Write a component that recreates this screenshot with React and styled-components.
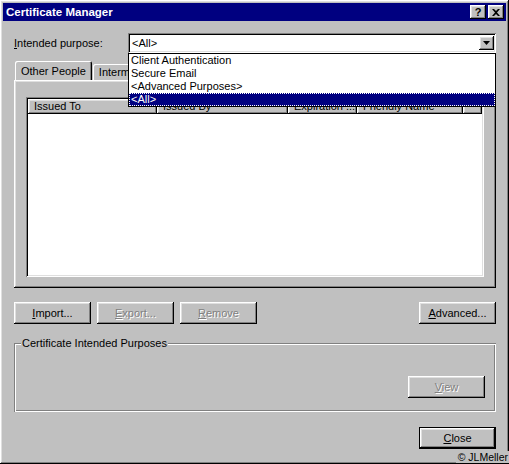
import styled, { createGlobalStyle, css } from "styled-components";

const GlobalStyle = createGlobalStyle`
  html, body {
    margin: 0;
    padding: 0;
    background: #c0c0c0;
  }
  * {
    box-sizing: border-box;
  }
`;

const raised = css`
  box-shadow: inset -1px -1px #000, inset 1px 1px #fff, inset -2px -2px #808080,
    inset 2px 2px #dfdfdf;
`;
const sunken = css`
  box-shadow: inset 1px 1px #808080, inset -1px -1px #fff, inset 2px 2px #000,
    inset -2px -2px #dfdfdf;
`;

const Window = styled.div`
  position: relative;
  width: 509px;
  height: 464px;
  padding: 3px;
  background: #c0c0c0;
  font-family: "Liberation Sans", Arial, sans-serif;
  font-size: 11px;
  color: #000;
  ${raised}
`;

const TitleBar = styled.div`
  display: flex;
  align-items: center;
  justify-content: space-between;
  height: 18px;
  padding: 0 2px 0 3px;
  background: #000080;
  color: #fff;
  font-weight: bold;
  font-size: 11.5px;
`;

const TitleButtons = styled.div`
  display: flex;
  gap: 2px;
`;

const TitleButton = styled.div`
  width: 16px;
  height: 14px;
  display: flex;
  align-items: center;
  justify-content: center;
  background: #c0c0c0;
  color: #000;
  font-size: 11px;
  font-weight: bold;
  ${raised}
`;

const Body = styled.div`
  padding: 0 10px 0 11px;
`;

const PurposeRow = styled.div`
  display: flex;
  align-items: center;
  margin-top: 12px;
  height: 20px;
`;

const Label = styled.div`
  width: 114px;
`;

const Combo = styled.div`
  position: relative;
  flex: 1;
  height: 20px;
  display: flex;
  align-items: center;
  padding: 0 2px 0 4px;
  background: #fff;
  ${sunken}
`;

const ComboValue = styled.div`
  flex: 1;
`;

const ArrowButton = styled.div`
  width: 15px;
  height: 14px;
  display: flex;
  align-items: center;
  justify-content: center;
  background: #c0c0c0;
  ${raised}
`;

const DropList = styled.div`
  position: absolute;
  left: 0;
  right: 0;
  top: 100%;
  border: 1px solid #000;
  background: #fff;
  z-index: 5;
`;

const DropItem = styled.div`
  height: 13px;
  line-height: 13px;
  padding-left: 2px;
  white-space: nowrap;
  ${(p) =>
    p.$selected &&
    css`
      background: #000080;
      color: #fff;
      outline: 1px dotted #fff;
      outline-offset: -1px;
    `}
`;

const Tabs = styled.div`
  margin-top: 8px;
`;

const TabStrip = styled.div`
  display: flex;
  align-items: flex-end;
  height: 19px;
  padding-left: 1px;
  overflow: hidden;
`;

const Tab = styled.div`
  position: relative;
  white-space: nowrap;
  padding: 0 6px;
  border-top-left-radius: 2px;
  border-top-right-radius: 2px;
  box-shadow: inset 1px 1px #fff, inset -1px 0 #000, inset -2px 0 #808080;
  display: flex;
  align-items: center;
  ${(p) =>
    p.$active
      ? css`
          height: 20px;
          margin-bottom: -1px;
          z-index: 2;
          background: #c0c0c0;
        `
      : css`
          height: 16px;
          margin-left: 1px;
        `}
`;

const Panel = styled.div`
  height: 208px;
  padding: 17px 12px 11px 12px;
  ${raised}
`;

const ListView = styled.div`
  height: 180px;
  padding: 2px;
  background: #fff;
  ${sunken}
`;

const HeaderRow = styled.div`
  display: flex;
  height: 15px;
`;

const HeaderCell = styled.div`
  width: ${(p) => p.$w}px;
  flex: ${(p) => (p.$fill ? 1 : "none")};
  padding-left: 6px;
  line-height: 14px;
  white-space: nowrap;
  overflow: hidden;
  background: #c0c0c0;
  ${raised}
`;

const ButtonRow = styled.div`
  display: flex;
  gap: 6px;
  margin-top: 14px;
`;

const Button = styled.div`
  width: 77px;
  height: 22px;
  display: flex;
  align-items: center;
  justify-content: center;
  background: #c0c0c0;
  ${raised}
  ${(p) =>
    p.$disabled &&
    css`
      color: #808080;
      text-shadow: 1px 1px #fff;
    `}
  ${(p) =>
    p.$default &&
    css`
      box-shadow: inset 0 0 0 1px #000, inset -2px -2px #000, inset 2px 2px #fff,
        inset -3px -3px #808080, inset 3px 3px #dfdfdf;
    `}
`;

const Spacer = styled.div`
  flex: 1;
`;

const GroupBox = styled.div`
  margin-top: 19px;
  height: 69px;
  padding: 0 11px 0 0;
  box-shadow: inset 1px 1px #808080, inset -1px -1px #fff, inset 2px 2px #fff,
    inset -2px -2px #808080;
  display: flex;
  flex-direction: column;
  align-items: flex-end;
`;

const Legend = styled.div`
  align-self: flex-start;
  margin: -6px 0 0 7px;
  padding: 0 1px;
  line-height: 12px;
  background: #c0c0c0;
`;

const GroupInner = styled.div`
  margin-top: 27px;
`;

const CloseRow = styled.div`
  display: flex;
  justify-content: flex-end;
  margin-top: 15px;
`;

const Credit = styled.div`
  position: absolute;
  right: 0;
  bottom: 1px;
  font-size: 10.5px;
  color: #000;
  background: #c0c0c0;
  padding: 0 1px 0 2px;
`;

const columns = [
  { name: "Issued To", w: 129 },
  { name: "Issued By", w: 131 },
  { name: "Expiration ...", w: 69 },
  { name: "Friendly Name", w: 106 },
];

const purposes = [
  "Client Authentication",
  "Secure Email",
  "<Advanced Purposes>",
  "<All>",
];

export default function App() {
  return (
    <>
      <GlobalStyle />
      <Window>
        <TitleBar>
          <span>Certificate Manager</span>
          <TitleButtons>
            <TitleButton>?</TitleButton>
            <TitleButton>
              <svg width="8" height="7" viewBox="0 0 8 7">
                <path d="M0 0h2l2 2 2-2h2L5 3.5 8 7H6L4 5 2 7H0l3-3.5z" fill="#000" />
              </svg>
            </TitleButton>
          </TitleButtons>
        </TitleBar>
        <Body>
          <PurposeRow>
            <Label>
              <u>I</u>ntended purpose:
            </Label>
            <Combo>
              <ComboValue>&lt;All&gt;</ComboValue>
              <ArrowButton>
                <svg width="7" height="4" viewBox="0 0 7 4">
                  <path d="M0 0h7L3.5 4z" fill="#000" />
                </svg>
              </ArrowButton>
              <DropList>
                {purposes.map((p) => (
                  <DropItem key={p} $selected={p === "<All>"}>
                    {p}
                  </DropItem>
                ))}
              </DropList>
            </Combo>
          </PurposeRow>
          <Tabs>
            <TabStrip>
              <Tab $active>Other People</Tab>
              <Tab>Intermediate Certification Authorities</Tab>
              <Tab>Trusted Root Certification Authorities</Tab>
            </TabStrip>
            <Panel>
              <ListView>
                <HeaderRow>
                  {columns.map((c) => (
                    <HeaderCell key={c.name} $w={c.w}>
                      {c.name}
                    </HeaderCell>
                  ))}
                  <HeaderCell $fill />
                </HeaderRow>
              </ListView>
            </Panel>
          </Tabs>
          <ButtonRow>
            <Button>
              <span>
                <u>I</u>mport...
              </span>
            </Button>
            <Button $disabled>
              <span>
                <u>E</u>xport...
              </span>
            </Button>
            <Button $disabled>
              <span>
                <u>R</u>emove
              </span>
            </Button>
            <Spacer />
            <Button>
              <span>
                <u>A</u>dvanced...
              </span>
            </Button>
          </ButtonRow>
          <GroupBox>
            <Legend>Certificate Intended Purposes</Legend>
            <GroupInner>
              <Button $disabled>
                <span>
                  <u>V</u>iew
                </span>
              </Button>
            </GroupInner>
          </GroupBox>
          <CloseRow>
            <Button $default>
              <span>
                <u>C</u>lose
              </span>
            </Button>
          </CloseRow>
        </Body>
        <Credit>© JLMeller</Credit>
      </Window>
    </>
  );
}
